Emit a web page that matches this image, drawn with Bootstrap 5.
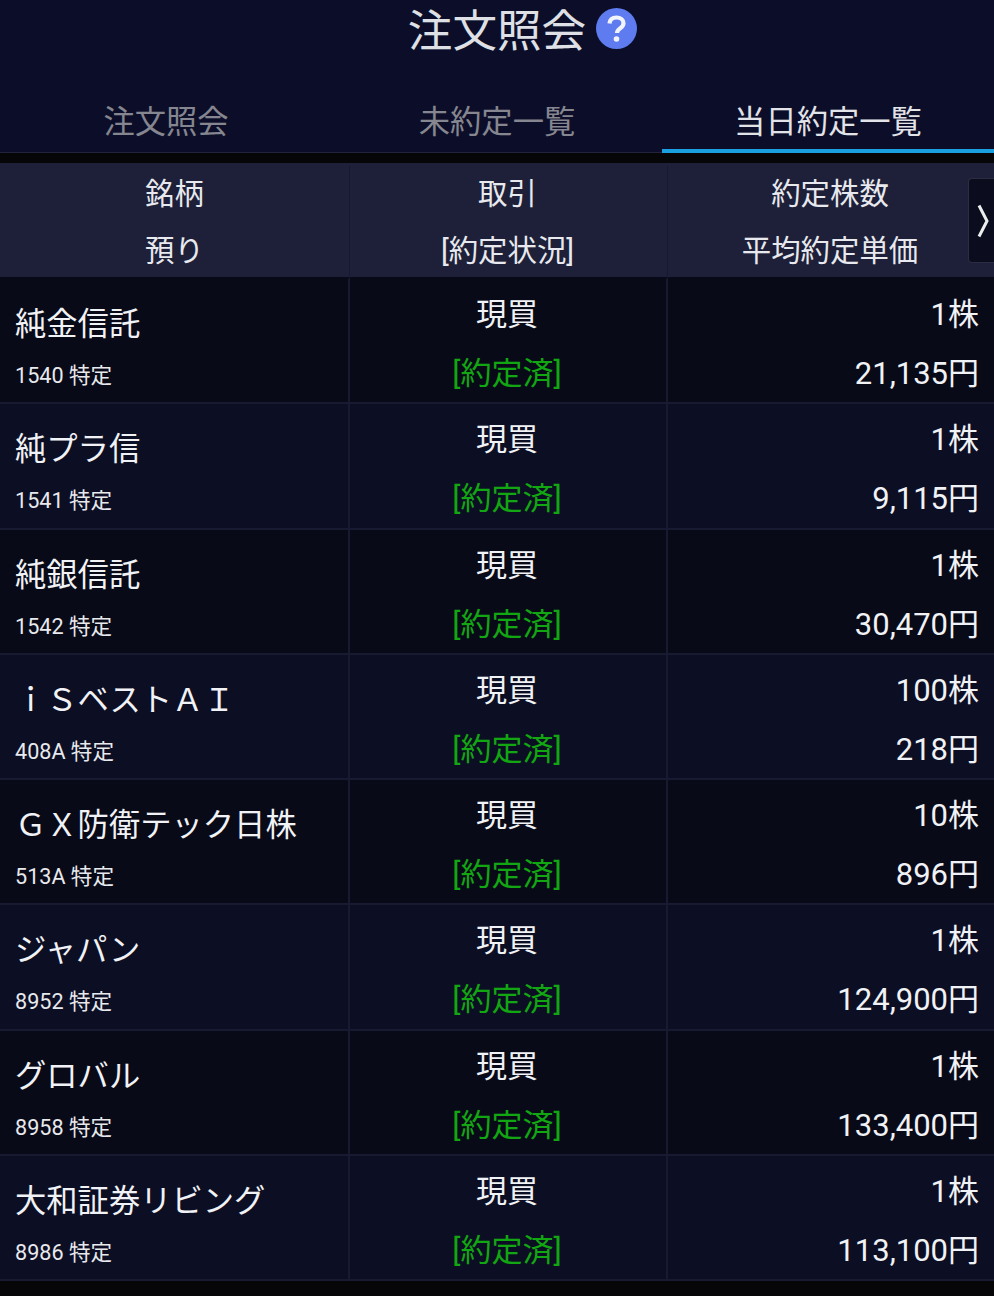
<!DOCTYPE html>
<html lang="ja"><head><meta charset="utf-8">
<link href="https://cdn.jsdelivr.net/npm/bootstrap@5.3.0/dist/css/bootstrap.min.css" rel="stylesheet">
<style>
html,body{background:#060609;margin:0}
body{width:994px;height:1296px;overflow:hidden;font-family:Roboto,"Noto Sans CJK JP",sans-serif;color:#f1f2f5}
.app-head{background:#0c0e29;height:153px}
.app-title{height:90px;font-size:44.6px;line-height:64px;color:#dfe0e6}
.title-wrap{position:relative}
.help-ic{position:absolute;left:188px;top:8px;width:41px;height:41px}
.tabs-line{height:63px;border-bottom:1px solid #22243c}
.tab-item{font-size:31.3px;line-height:66px;color:#85868f;text-align:center;height:63px}
.t1{width:332px}.t2{width:330px}.t3{width:332px}
.tab-on{color:#e2e3e8;border-bottom:4px solid #1a9fe0;}
.grid-row{display:grid;grid-template-columns:350px 318px 326px}
.head-row{margin-top:10px;height:114px;background:#1d2038;font-size:29.4px;color:#e8e9ee;text-align:center;padding-top:3px}
.head-row>div{border-right:1px solid #161831;line-height:57px}
.head-row>div:nth-child(2){padding-right:2px}
.head-row>div:last-child{border-right:0;padding-right:2px}
.body-row{height:125.25px;background:#0c0e23;border-bottom:2px solid #181a31}
.row-odd{background:#080a18}
.first-row{height:127.25px;padding-top:2px}
.body-row>div{border-right:2px solid #181a31}
.body-row>div:last-child{border-right:0}
.name-cell{padding:0 0 0 15px}
.stock{font-size:31.3px;line-height:40px;margin-top:26px;white-space:nowrap}
.code{font-size:21.6px;line-height:30px;margin-top:16px;color:#e8e9ed}
.mid-cell{text-align:center;font-size:31px;padding-right:2px}
.val-cell{text-align:right;font-size:31px;padding-right:15px}
.ln1{line-height:40px;margin-top:16px}
.ln2{line-height:40px;margin-top:19px}
.done{color:#12a612}
.more-btn{top:178px;right:0;width:26px;height:85px;padding-left:3px;background:#0b0d1f;border:1px solid #2b2d42;border-right:0;border-radius:4px 0 0 4px}
</style></head><body>
<div class="app-head">
<div class="app-title d-flex justify-content-center align-items-start"><span class="title-wrap">注文照会
<svg class="help-ic" viewBox="0 0 41 41"><circle cx="20.5" cy="20.5" r="20.5" fill="#5e7cf0"/><path d="M13.5 15.5c.4-4 3.300-6 7-6 4 0 7 2.400 7 5.800 0 5-6.500 5.200-6.500 9.700" fill="none" stroke="#f2f4fc" stroke-width="4.200"/><circle cx="20.500" cy="31" r="2.800" fill="#f2f4fc"/></svg></span></div>
<div class="tabs-line d-flex"><div class="tab-item t1">注文照会</div><div class="tab-item t2">未約定一覧</div><div class="tab-item t3 tab-on">当日約定一覧</div></div>
</div>
<div class="grid-row head-row"><div>銘柄<br>預り</div><div>取引<br>[約定状況]</div><div>約定株数<br>平均約定単価</div></div>
<div class="more-btn position-absolute d-flex align-items-center justify-content-center"><svg width="12" height="34" viewBox="0 0 12 34"><path d="M2 1.500l8 15.500-8 15.500" fill="none" stroke="#eceded" stroke-width="3"/></svg></div>
<div class="grid-row body-row row-odd first-row"><div class="name-cell"><div class="stock">純金信託</div><div class="code">1540 特定</div></div><div class="mid-cell"><div class="ln1">現買</div><div class="ln2 done">[約定済]</div></div><div class="val-cell"><div class="ln1">1株</div><div class="ln2">21,135円</div></div></div>
<div class="grid-row body-row"><div class="name-cell"><div class="stock">純プラ信</div><div class="code">1541 特定</div></div><div class="mid-cell"><div class="ln1">現買</div><div class="ln2 done">[約定済]</div></div><div class="val-cell"><div class="ln1">1株</div><div class="ln2">9,115円</div></div></div>
<div class="grid-row body-row row-odd"><div class="name-cell"><div class="stock">純銀信託</div><div class="code">1542 特定</div></div><div class="mid-cell"><div class="ln1">現買</div><div class="ln2 done">[約定済]</div></div><div class="val-cell"><div class="ln1">1株</div><div class="ln2">30,470円</div></div></div>
<div class="grid-row body-row"><div class="name-cell"><div class="stock">ｉＳベストＡＩ</div><div class="code">408A 特定</div></div><div class="mid-cell"><div class="ln1">現買</div><div class="ln2 done">[約定済]</div></div><div class="val-cell"><div class="ln1">100株</div><div class="ln2">218円</div></div></div>
<div class="grid-row body-row row-odd"><div class="name-cell"><div class="stock">ＧＸ防衛テック日株</div><div class="code">513A 特定</div></div><div class="mid-cell"><div class="ln1">現買</div><div class="ln2 done">[約定済]</div></div><div class="val-cell"><div class="ln1">10株</div><div class="ln2">896円</div></div></div>
<div class="grid-row body-row"><div class="name-cell"><div class="stock">ジャパン</div><div class="code">8952 特定</div></div><div class="mid-cell"><div class="ln1">現買</div><div class="ln2 done">[約定済]</div></div><div class="val-cell"><div class="ln1">1株</div><div class="ln2">124,900円</div></div></div>
<div class="grid-row body-row row-odd"><div class="name-cell"><div class="stock">グロバル</div><div class="code">8958 特定</div></div><div class="mid-cell"><div class="ln1">現買</div><div class="ln2 done">[約定済]</div></div><div class="val-cell"><div class="ln1">1株</div><div class="ln2">133,400円</div></div></div>
<div class="grid-row body-row"><div class="name-cell"><div class="stock">大和証券リビング</div><div class="code">8986 特定</div></div><div class="mid-cell"><div class="ln1">現買</div><div class="ln2 done">[約定済]</div></div><div class="val-cell"><div class="ln1">1株</div><div class="ln2">113,100円</div></div></div>
<script src="https://cdn.jsdelivr.net/npm/bootstrap@5.3.0/dist/js/bootstrap.bundle.min.js"></script>
</body></html>
